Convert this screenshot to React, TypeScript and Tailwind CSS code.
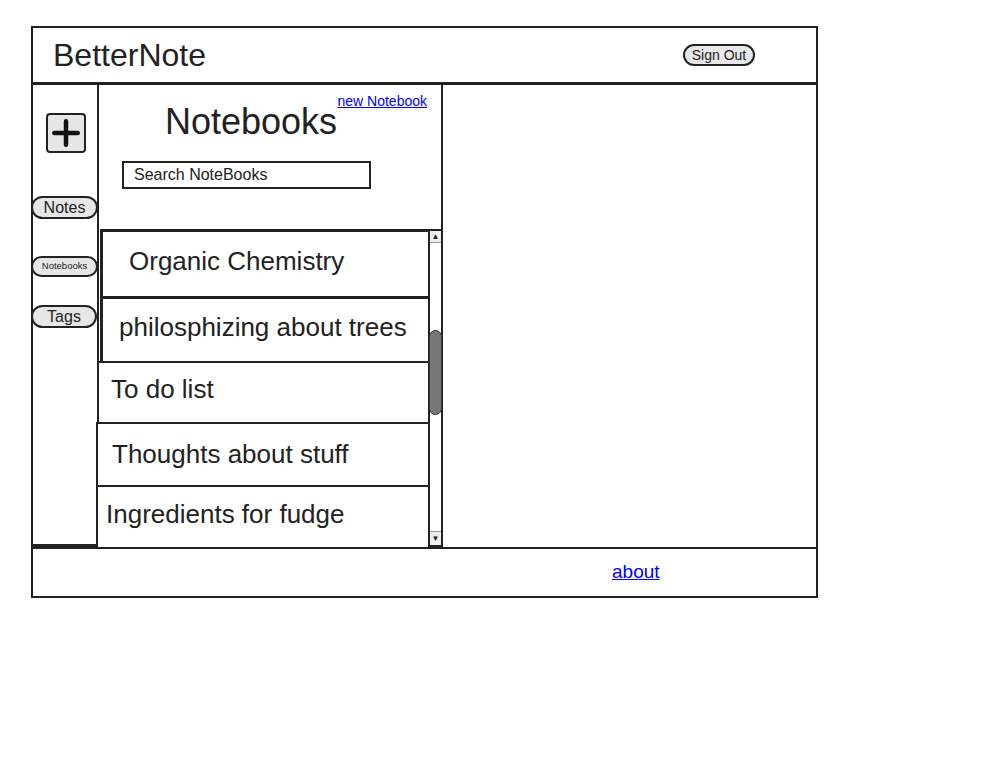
import React from 'react';

const notebooks = [
  { name: 'Organic Chemistry', box: 'h-[67px] ml-[1px] border-t-[3px] border-l-[3px] pl-[26px] pb-[6px]' },
  { name: 'philosphizing about trees', box: 'h-[65px] ml-[1px] border-t-[3px] border-l-[3px] pl-[16px] pb-[6px]' },
  { name: 'To do list', box: 'h-[61px] -ml-[2px] border-t-2 border-l-2 pl-[12px] pb-[7px]' },
  { name: 'Thoughts about stuff', box: 'h-[63px] -ml-[3px] border-t-2 border-l-2 pl-[14px]' },
  { name: 'Ingredients for fudge', box: 'h-[62px] -ml-[3px] border-t-2 border-l-2 pl-[8px] pb-[6px]' },
];

function Pill({ label, className }: { label: string; className: string }) {
  return (
    <button
      className={`-ml-[2px] flex items-center justify-center rounded-full border-2 border-[#222] bg-[#e6e6e6] text-[#222] ${className}`}
    >
      {label}
    </button>
  );
}

function PlusIcon() {
  return (
    <svg width="40" height="40" viewBox="0 0 40 40">
      <path d="M20 7 V33 M7 20 H33" stroke="#111" strokeWidth="5" strokeLinecap="round" />
    </svg>
  );
}

function Scrollbar() {
  return (
    <div className="flex w-[15px] shrink-0 flex-col border-2 border-[#222] bg-white">
      <div className="flex h-[12px] items-center justify-center border-b border-[#999] bg-[#eee] text-[8px] leading-none text-[#222]">
        ▲
      </div>
      <div className="mt-[87px] -mx-[1px] h-[85px] rounded-full border border-[#333] bg-[#777]" />
      <div className="flex-1" />
      <div className="flex h-[14px] items-center justify-center border-t border-[#999] bg-[#eee] text-[8px] leading-none text-[#222]">
        ▼
      </div>
    </div>
  );
}

export default function App() {
  return (
    <div className="min-h-[758px] bg-white pl-[31px] pt-[26px] font-['Liberation_Sans',Arial,sans-serif] text-[#222]">
      <div className="w-[787px]">
        <header className="flex h-[59px] items-center border-2 border-b-[3px] border-[#222] pl-[20px]">
          <h1 className="text-[32px] leading-none">BetterNote</h1>
          <button className="ml-[477px] flex h-[22px] w-[72px] items-center justify-center rounded-full border-2 border-[#222] bg-[#e8e8e8] text-[14px] leading-none">
            Sign Out
          </button>
        </header>

        <div className="flex h-[462px] border-x-2 border-[#222]">
          <aside className="flex w-[66px] shrink-0 flex-col items-start border-r-2 border-b-[3px] border-[#222]">
            <button className="ml-[13px] mt-[28px] flex h-[40px] w-[40px] items-center justify-center rounded-[4px] border-2 border-[#222] bg-[#e6e6e6]">
              <PlusIcon />
            </button>
            <Pill label="Notes" className="mt-[43px] h-[23px] w-[67px] text-[16px]" />
            <Pill label="Notebooks" className="mt-[37px] h-[21px] w-[67px] text-[9.5px]" />
            <Pill label="Tags" className="mt-[28px] h-[23px] w-[66px] text-[16px]" />
          </aside>

          <section className="flex w-[344px] shrink-0 flex-col">
            <div className="h-[144px] border-r-2 border-[#222]">
              <div className="pr-[14px] pt-[8px] text-right text-[14px] leading-[16px]">
                <a href="#" className="text-[#0000ff] underline">
                  new Notebook
                </a>
              </div>
              <h2 className="-mt-[5px] pl-[66px] text-[36px] leading-[36px]">Notebooks</h2>
              <div className="ml-[23px] mt-[21px] flex h-[28px] w-[249px] items-center border-2 border-[#222] pl-[10px] text-[16px]">
                Search NoteBooks
              </div>
            </div>

            <div className="flex flex-1">
              <div className="flex flex-1 flex-col">
                {notebooks.map((n) => (
                  <div key={n.name} className={`flex items-center border-[#222] bg-white text-[26px] ${n.box}`}>
                    {n.name}
                  </div>
                ))}
              </div>
              <Scrollbar />
            </div>
          </section>

          <main className="flex-1" />
        </div>

        <footer className="flex h-[51px] items-center border-2 border-[#222] pl-[579px]">
          <a href="#" className="text-[19px] text-[#0000ff] underline">
            about
          </a>
        </footer>
      </div>
    </div>
  );
}
